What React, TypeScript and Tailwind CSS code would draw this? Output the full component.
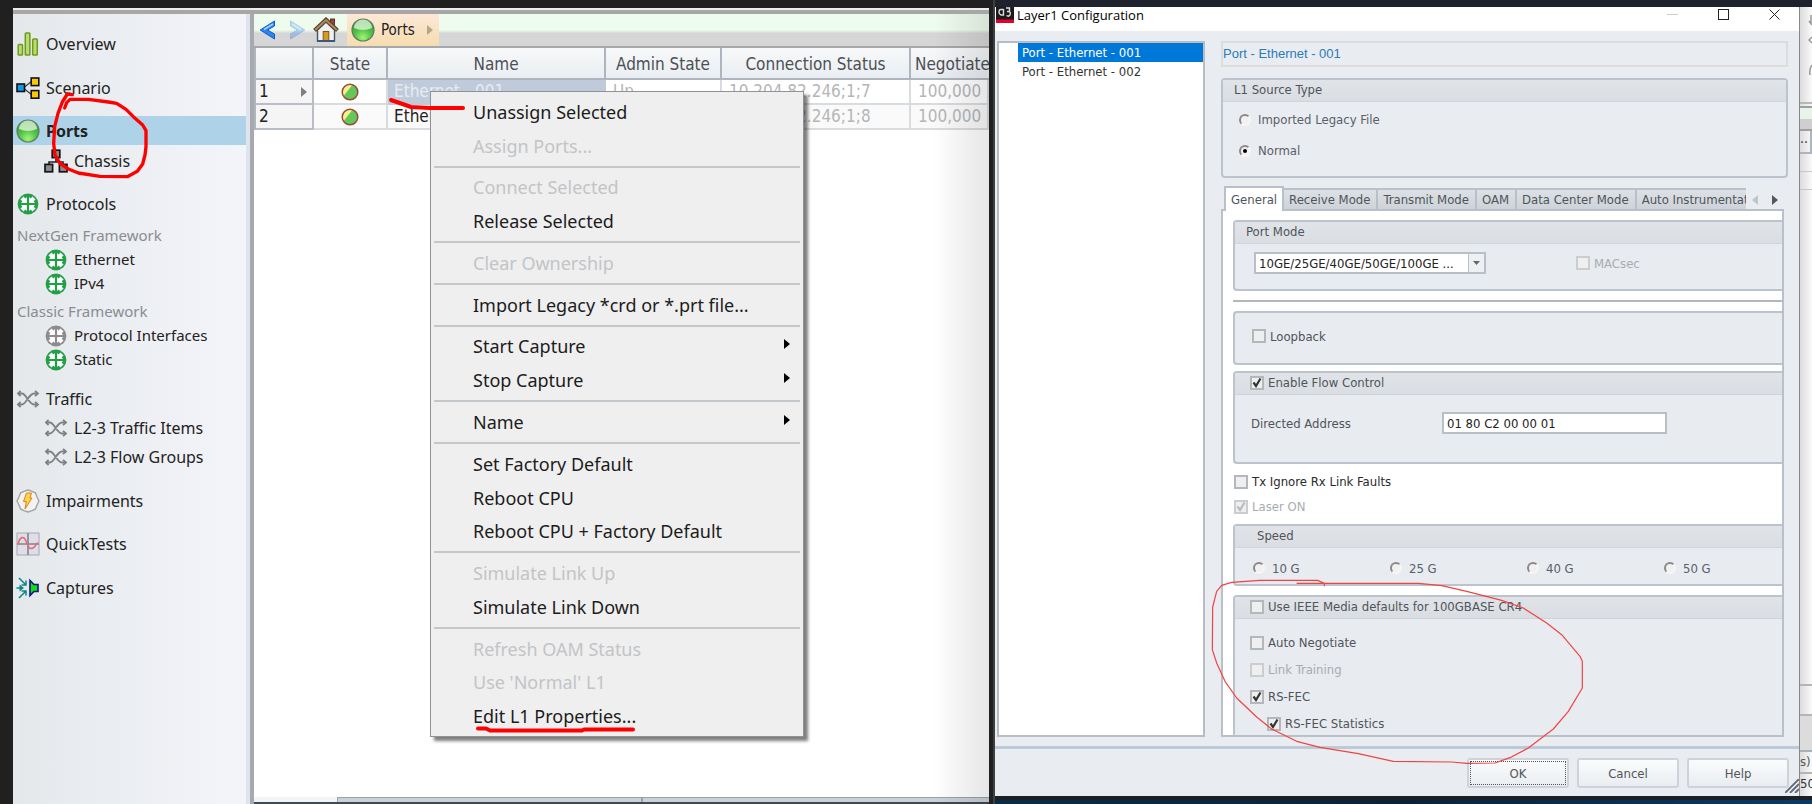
import type { ReactNode } from "react";

/* ---------- icons ---------- */

function OverviewIcon() {
  return (
    <svg width="22" height="24" viewBox="0 0 22 24" fill="#b9dc72" stroke="#6f9a1c" strokeWidth="1.5">
      <rect x="1.2" y="12.5" width="4.3" height="10.5" rx="0.8" />
      <rect x="8.3" y="1" width="4.6" height="22" rx="0.8" />
      <rect x="15.7" y="7" width="4.6" height="16" rx="0.8" />
    </svg>
  );
}

function ScenarioIcon() {
  return (
    <svg width="24" height="22" viewBox="0 0 24 22">
      <path d="M8 10.5 L16 4 M8 11.5 L16 18" stroke="#444" strokeWidth="1.3" fill="none" />
      <rect x="1" y="7" width="7.5" height="7.5" fill="#1597e8" stroke="#111" strokeWidth="1.6" />
      <rect x="15.2" y="1" width="7.6" height="7.6" fill="#fcc805" stroke="#111" strokeWidth="1.6" />
      <rect x="15.2" y="13.6" width="7.6" height="7.6" fill="#fcc805" stroke="#111" strokeWidth="1.6" />
    </svg>
  );
}

function BallIcon({ id }: { id: string }) {
  return (
    <svg width="24" height="24" viewBox="0 0 24 24">
      <defs>
        <radialGradient id={id} cx="50%" cy="85%" r="75%">
          <stop offset="0" stopColor="#a4f47c" />
          <stop offset="0.5" stopColor="#55c646" />
          <stop offset="1" stopColor="#3b9a3a" />
        </radialGradient>
      </defs>
      <circle cx="12" cy="12" r="11" fill={`url(#${id})`} stroke="#5c7f62" strokeWidth="1.2" />
      <path d="M3 10 A9 8.5 0 0 1 21 10 Q12 14 3 10Z" fill="#e6f8e2" opacity="0.75" />
    </svg>
  );
}

function ChassisIcon() {
  return (
    <svg width="24" height="24" viewBox="0 0 24 24">
      <path d="M12 8 V13 M5 16 V13 H19 V16" stroke="#222" strokeWidth="1.6" fill="none" />
      <rect x="8.2" y="1.2" width="7.6" height="7.4" fill="#8b8b8b" stroke="#151515" strokeWidth="1.7" />
      <rect x="1" y="15.4" width="7.6" height="7.4" fill="#8b8b8b" stroke="#151515" strokeWidth="1.7" />
      <rect x="15.4" y="15.4" width="7.6" height="7.4" fill="#8b8b8b" stroke="#151515" strokeWidth="1.7" />
    </svg>
  );
}

function ProtocolIcon({ color }: { color: string }) {
  return (
    <svg width="22" height="22" viewBox="0 0 22 22">
      <circle cx="11" cy="11" r="10.4" fill={color} />
      <g fill="#fff">
        {[0, 90, 180, 270].map((a) => (
          <path key={a} transform={`rotate(${a} 11 11)`} d="M9.9 9.9 H4 L5.4 8.3 L3.4 6.6 L6.6 3.4 L8.3 5.4 L9.9 4Z" />
        ))}
      </g>
    </svg>
  );
}

function TrafficIcon() {
  return (
    <svg width="24" height="18" viewBox="0 0 24 18" fill="none" stroke="#808080" strokeWidth="1.8">
      <path d="M2 3.5 H6 C10 3.5 13 14.5 18 14.5 H22 M2 14.5 H6 C10 14.5 13 3.5 18 3.5 H22" />
      <path d="M19 0.8 L22 3.5 L19 6.2 M19 11.8 L22 14.5 L19 17.2 M4.6 1 L2 3.5 L4.6 6 M4.6 12 L2 14.5 L4.6 17" />
    </svg>
  );
}

function ImpairmentsIcon() {
  return (
    <svg width="24" height="24" viewBox="0 0 24 24">
      <path d="M12 1 L16 2.4 L19.5 4 L21 8 L23 12 L21 16 L19.5 20 L16 21.6 L12 23 L8 21.6 L4.5 20 L3 16 L1 12 L3 8 L4.5 4 L8 2.4Z" fill="#f5f3f2" stroke="#a3a3a3" strokeWidth="1.4" strokeLinejoin="round" />
      <path d="M10.5 4 H15.5 L13.8 9 H16 L9 20 L10.4 12.5 H7.5Z" fill="#ffd54a" stroke="#df7e1c" strokeWidth="1" />
    </svg>
  );
}

function QuickTestsIcon() {
  return (
    <svg width="24" height="24" viewBox="0 0 24 24">
      <rect x="1" y="1" width="22" height="22" fill="#dedee8" stroke="#a8a8b2" />
      <path d="M12 1 V23 M1 12 H23" stroke="#83838f" strokeWidth="1.6" />
      <path d="M2 12 C4 4 8 4 10 9 S13 18 17 16 S19 11 22 11" fill="none" stroke="#e86a72" strokeWidth="1.6" />
    </svg>
  );
}

function CapturesIcon() {
  return (
    <svg width="24" height="24" viewBox="0 0 24 24">
      <g stroke="#0d8585" strokeWidth="1.5" fill="none">
        <path d="M3 2 L10 9 M10 4.5 V9 H5.5 M3 22 L10 15 M5.5 15 H10 V19.5 M0.5 12 H6" />
      </g>
      <path d="M3.5 8.5 L8 12 L3.5 15.5Z" fill="#0d8585" />
      <path d="M14 4.5 L18 8.5 H22 V15.5 H18 L14 19.5Z" fill="#0de20d" stroke="#12128a" strokeWidth="1.6" />
    </svg>
  );
}

function HomeIcon() {
  return (
    <svg width="26" height="26" viewBox="0 0 26 26">
      <rect x="17.5" y="2" width="4" height="8" fill="#9c4638" stroke="#5f3028" />
      <path d="M4.5 13 L13 5 L21.5 13 V24 H4.5Z" fill="#eef1f6" stroke="#4a5560" strokeWidth="1.4" />
      <path d="M1.5 13.5 L13 2.8 L24.5 13.5" fill="none" stroke="#5b452f" strokeWidth="4.2" />
      <path d="M2.2 13 L13 3 L23.8 13" fill="none" stroke="#b08b5a" strokeWidth="1.8" />
      <rect x="10.2" y="14.5" width="5.6" height="9.5" fill="#d99a1e" stroke="#7b5a1e" />
      <path d="M4 24 H22" stroke="#39597d" strokeWidth="2" />
    </svg>
  );
}

function BackArrow({ faded }: { faded?: boolean }) {
  return (
    <svg
      width="18"
      height="20"
      viewBox="0 0 18 20"
      className={faded ? "-scale-x-100 opacity-30" : ""}
      aria-hidden="true"
    >
      <path d="M15.5 1 V6 L8.5 10 L15.5 14 V19 L1.2 10Z" fill="#2c86f2" stroke="#1458c8" strokeWidth="1" />
      <path d="M14 4 L5 9.5" stroke="#9fd0ff" strokeWidth="1.5" />
    </svg>
  );
}

function StateIcon() {
  return (
    <svg width="18" height="18" viewBox="0 0 18 18" className="mx-auto block">
      <circle cx="9" cy="9" r="7.8" fill="#62c85a" />
      <path d="M2.6 13 A7.8 7.8 0 0 1 11.5 1.8Z" fill="#f7f08c" />
      <circle cx="9" cy="9" r="7.8" fill="none" stroke="#9a4a3a" strokeWidth="1.5" />
    </svg>
  );
}

function Triangle({ className, left }: { className: string; left?: boolean }) {
  return (
    <svg width="6" height="10" viewBox="0 0 6 10" className={className}>
      <path d={left ? "M6 0 L0 5 L6 10Z" : "M0 0 L6 5 L0 10Z"} fill="currentColor" />
    </svg>
  );
}

/* ---------- sidebar ---------- */

function NavItem({ icon, label, sub, active, short, className = "" }: {
  icon: ReactNode;
  label: string;
  sub?: boolean;
  active?: boolean;
  short?: boolean;
  className?: string;
}) {
  return (
    <a
      href="#"
      className={`flex items-center gap-[6px] whitespace-nowrap text-[#222] ${short ? "h-6 pt-[3px] text-[15px]" : "h-[29px] text-base"} ${sub ? "pl-[31px]" : "pl-[3px]"} ${active ? "bg-[#aed2e8] font-bold" : ""} ${className}`}
    >
      <span className="flex w-6 shrink-0 justify-center">{icon}</span>
      {label}
    </a>
  );
}

function NavHeading({ children }: { children: string }) {
  return <h2 className="mt-[6px] h-[22px] pl-1 text-[15px] leading-[22px] text-[#8a8c90]">{children}</h2>;
}

function Sidebar() {
  return (
    <nav className="relative w-[241px] shrink-0 border-r-4 border-[#a7a9ae] bg-linear-to-r from-[#e4e8eb] to-[#f4f5fa] pr-1 pt-[15px]">
      <NavItem icon={<OverviewIcon />} label="Overview" />
      <NavItem icon={<ScenarioIcon />} label="Scenario" className="mt-[15px]" />
      <NavItem icon={<BallIcon id="ball-nav" />} label="Ports" active className="mt-[14px]" />
      <NavItem icon={<ChassisIcon />} label="Chassis" sub className="mt-px" />
      <NavItem icon={<ProtocolIcon color="#22a045" />} label="Protocols" className="mt-[14px]" />
      <NavHeading>NextGen Framework</NavHeading>
      <NavItem icon={<ProtocolIcon color="#22a045" />} label="Ethernet" sub short />
      <NavItem icon={<ProtocolIcon color="#22a045" />} label="IPv4" sub short />
      <NavHeading>Classic Framework</NavHeading>
      <NavItem icon={<ProtocolIcon color="#8c8c8c" />} label="Protocol Interfaces" sub short />
      <NavItem icon={<ProtocolIcon color="#22a045" />} label="Static" sub short />
      <NavItem icon={<TrafficIcon />} label="Traffic" className="mt-[14px]" />
      <NavItem icon={<TrafficIcon />} label="L2-3 Traffic Items" sub />
      <NavItem icon={<TrafficIcon />} label="L2-3 Flow Groups" sub />
      <NavItem icon={<ImpairmentsIcon />} label="Impairments" className="mt-[15px]" />
      <NavItem icon={<QuickTestsIcon />} label="QuickTests" className="mt-[14px]" />
      <NavItem icon={<CapturesIcon />} label="Captures" className="mt-[15px]" />
      <div className="absolute inset-y-0 right-0 w-1 bg-[#dfe3ec]" />
      <svg width="110" height="100" viewBox="0 0 330 300" className="pointer-events-none absolute left-[34px] top-[74px]">
        <path
          transform="translate(-141 -264)"
          d="M217 284 L202 282 L187 306 L174 340 L164 380 L161 430 L165 465 L180 490 L205 507 L235 519 L300 529 L382 530 L412 514 L428 492 L435 465 L438 440 L438 392 L428 375 L400 350 L378 328 L350 310 L325 306 L265 298 L210 298 L200 308 L194 324"
          fill="none"
          stroke="#ff0000"
          strokeWidth="10"
          strokeLinecap="round"
          strokeLinejoin="round"
        />
      </svg>
    </nav>
  );
}

/* ---------- context menu ---------- */

const menuGroups: { label: string; disabled?: boolean; arrow?: boolean }[][] = [
  [{ label: "Unassign Selected" }, { label: "Assign Ports...", disabled: true }],
  [{ label: "Connect Selected", disabled: true }, { label: "Release Selected" }],
  [{ label: "Clear Ownership", disabled: true }],
  [{ label: "Import Legacy *crd or *.prt file..." }],
  [{ label: "Start Capture", arrow: true }, { label: "Stop Capture", arrow: true }],
  [{ label: "Name", arrow: true }],
  [{ label: "Set Factory Default" }, { label: "Reboot CPU" }, { label: "Reboot CPU + Factory Default" }],
  [{ label: "Simulate Link Up", disabled: true }, { label: "Simulate Link Down" }],
  [
    { label: "Refresh OAM Status", disabled: true },
    { label: "Use 'Normal' L1", disabled: true },
    { label: "Edit L1 Properties..." },
  ],
];

function ContextMenu() {
  return (
    <div
      role="menu"
      className="absolute left-[176px] top-[77px] z-10 flex h-[646px] w-[374px] flex-col border border-[#8f9296] bg-[#efefef] px-[3px] py-[3px] shadow-[4px_4px_3px_rgba(0,0,0,0.5)]"
    >
      {menuGroups.map((group, g) => (
        <div key={g} className="contents">
          {g > 0 && <div role="separator" className="my-[3px] h-[2px] shrink-0 bg-[#c3c8cc]" />}
          {group.map((item) => (
            <button
              key={item.label}
              type="button"
              role="menuitem"
              disabled={item.disabled}
              className="flex flex-1 items-center justify-between pl-[39px] pr-[10px] text-left text-lg leading-none text-[#1c1c1c] disabled:text-[#c2c4c7]"
            >
              {item.label}
              {item.arrow && <Triangle className="mb-1 text-black" />}
            </button>
          ))}
        </div>
      ))}
      <svg width="80" height="16" viewBox="0 0 80 16" className="pointer-events-none absolute -left-[45px] top-[3px]">
        <path d="M5 5 L18 9.5 L25 12 L44 13 L77 13" fill="none" stroke="#ff0000" strokeWidth="4" strokeLinecap="round" strokeLinejoin="round" />
      </svg>
      <svg width="164" height="10" viewBox="0 0 164 10" className="pointer-events-none absolute bottom-[1px] left-[43px]">
        <path d="M4 3.5 L12 3.5 L16 5.5 L108 5.5 L110 4.5 L159 4.5" fill="none" stroke="#ff0000" strokeWidth="4" strokeLinecap="round" strokeLinejoin="round" />
      </svg>
    </div>
  );
}

/* ---------- ports window ---------- */

const th = "h-8 overflow-hidden whitespace-nowrap border-b-2 border-r-2 border-[#aeb5bd] p-0 pt-[2px] text-center font-normal text-[#4c5054]";
const td = "h-[25px] overflow-hidden whitespace-nowrap border-b-2 border-r-2 border-[#d9dcdf] p-0 pl-[7px] text-[#b4b6b8]";

function PortsWindow() {
  return (
    <section className="flex min-h-0 min-w-0 flex-col bg-[#202020] pl-[13px] pr-1 pt-2">
      <div className="h-[2px] shrink-0 bg-[#ececec]" />
      <div className="h-1 shrink-0 bg-[#a7a7a7]" />
      <div className="flex min-h-0 flex-1">
        <Sidebar />
        <div className="relative flex min-w-0 flex-1 flex-col bg-white">
          <div className="flex h-[34px] shrink-0 items-center border-b-2 border-[#a6a9ab] bg-linear-to-b from-[#eefcee] from-50% to-[#d6d6d6] to-60% pl-[5px]">
            <button type="button" aria-label="Back"><BackArrow /></button>
            <button type="button" aria-label="Forward" className="ml-[11px]"><BackArrow faded /></button>
            <button type="button" aria-label="Home" className="ml-[7px]"><HomeIcon /></button>
            <button type="button" className="ml-[8px] flex h-full items-center gap-[6px] bg-linear-to-b from-[#fde8d6] to-[#f5dcb0] pl-1 pr-[6px] font-['DejaVu_Sans_Condensed','Noto_Sans',sans-serif] text-[15px] text-[#222]">
              <BallIcon id="ball-crumb" />
              Ports
              <Triangle className="ml-[6px] text-[#b3a68c]" />
            </button>
          </div>
          <table className="w-full table-fixed border-separate border-spacing-0 border-l-2 border-[#aeb5bd] font-['DejaVu_Sans_Condensed','Noto_Sans',sans-serif] text-[17px] leading-none">
            <colgroup>
              <col className="w-[58px]" />
              <col className="w-[74px]" />
              <col className="w-[218px]" />
              <col className="w-[116px]" />
              <col className="w-[189px]" />
              <col />
            </colgroup>
            <thead>
              <tr className="bg-linear-to-b from-[#f7f8f9] to-[#e9edf2]">
                <th className={th} aria-label="Row" />
                <th className={th}>State</th>
                <th className={th}>Name</th>
                <th className={th}>Admin State</th>
                <th className={th}>Connection Status</th>
                <th className="h-8 overflow-hidden whitespace-nowrap border-b-2 border-[#aeb5bd] p-0 pl-1 pt-[2px] text-left font-normal text-[#4c5054]">Negotiate</th>
              </tr>
            </thead>
            <tbody>
              <tr>
                <td className="h-[25px] border-b-2 border-r-2 border-[#b9bec4] bg-[#f5f5f6] p-0 pl-[3px] pr-[5px] text-[#222]">
                  <span className="flex items-center justify-between">1<Triangle className="text-[#7d7f82]" /></span>
                </td>
                <td className="border-b-2 border-r-2 border-[#d9dcdf] p-0"><StateIcon /></td>
                <td className="overflow-hidden whitespace-nowrap border-b-2 border-r-2 border-[#bfcbdb] bg-[#bfcbdb] p-0 pl-[6px] text-[#e6ebf1]">Ethernet - 001</td>
                <td className={td}>Up</td>
                <td className={td}>10.204.82.246;1;7</td>
                <td className={td}>100,000</td>
              </tr>
              <tr className="bg-[#fafafa]">
                <td className="h-[25px] border-b-2 border-r-2 border-[#b9bec4] bg-[#f5f5f6] p-0 pl-[3px] text-[#222]">2</td>
                <td className="border-b-2 border-r-2 border-[#d9dcdf] p-0"><StateIcon /></td>
                <td className="overflow-hidden whitespace-nowrap border-b-2 border-r-2 border-[#d9dcdf] p-0 pl-[6px] text-[#222]">Ethernet - 002</td>
                <td className={td}>Up</td>
                <td className={td}>10.204.82.246;1;8</td>
                <td className={td}>100,000</td>
              </tr>
            </tbody>
          </table>
          <ContextMenu />
          <div className="mt-auto flex h-[7px] shrink-0 border-b-2 border-[#3c4a58]">
            <div className="w-[84px] border-r border-[#9aa3ac] bg-[#f2f4f6]" />
            <div className="w-[305px] border-r-2 border-t border-[#9aa3ac] bg-[#ccd1d6]" />
            <div className="flex-1 border-t border-[#9aa3ac] bg-[#ccd1d6]" />
          </div>
          <div className="pointer-events-none absolute inset-y-0 right-0 w-14 bg-linear-to-r from-transparent to-black/10" />
        </div>
      </div>
    </section>
  );
}

/* ---------- form controls ---------- */

function Check({ label, checked, disabled, dark, className = "" }: {
  label: string;
  checked?: boolean;
  disabled?: boolean;
  dark?: boolean;
  className?: string;
}) {
  return (
    <label className={`flex items-center gap-1 whitespace-nowrap ${disabled ? "text-[#a9acaf]" : dark ? "text-[#2a2a2a]" : "text-[#505459]"} ${className}`}>
      <span className="relative flex">
        <input
          type="checkbox"
          defaultChecked={checked}
          disabled={disabled}
          className="h-[14px] w-[14px] appearance-none border-2 border-[#b4b8bd] bg-[#efefef] disabled:border-[#cbcdd0]"
        />
        {checked && (
          <svg width="14" height="14" viewBox="0 0 14 14" className="pointer-events-none absolute inset-0">
            <path d="M3.5 6.5 L6 10 L10.5 2.5" fill="none" stroke={disabled ? "#b9bcbf" : "#333"} strokeWidth="2.2" />
          </svg>
        )}
      </span>
      {label}
    </label>
  );
}

function Radio({ label, name, checked, className = "" }: { label: string; name: string; checked?: boolean; className?: string }) {
  return (
    <label className={`flex items-center gap-[7px] whitespace-nowrap text-[#5a5f68] ${className}`}>
      <span className="relative flex">
        <input
          type="radio"
          name={name}
          defaultChecked={checked}
          className="h-3 w-3 appearance-none rounded-full border-2 border-[#f6f6f6] border-l-[#8a8a8a] border-t-[#8a8a8a] bg-[#f1f1f1]"
        />
        {checked && <span className="pointer-events-none absolute left-1 top-1 h-1 w-1 rounded-full bg-black" />}
      </span>
      {label}
    </label>
  );
}

const groupBox = "rounded-l-sm border-y-2 border-l-2 border-[#bcc3cc] bg-[#e8ebf0]";
const groupHead = "flex h-[22px] items-center border-b border-[#cfd4da] bg-linear-to-b from-[#e0e4e8] to-[#dadee3] pb-[2px] text-[#505459]";

const tabs = ["Receive Mode", "Transmit Mode", "OAM", "Data Center Mode", "Auto Instrumentation"];

function GeneralPanel() {
  return (
    <div className="mr-1 flex min-h-0 flex-1 flex-col overflow-hidden border-2 border-[#b9c0c9] bg-white pl-[10px] pt-[9px]">
      <fieldset className={`${groupBox} h-[71px] shrink-0`}>
        <div className={`${groupHead} pl-[11px]`}>Port Mode</div>
        <div className="flex items-center pl-[19px] pt-2">
          <div className="relative w-[232px]">
            <select aria-label="Port Mode" className="h-[22px] w-full appearance-none border-2 border-[#b9bfc7] bg-white pl-[3px] leading-none text-[#222]">
              <option>10GE/25GE/40GE/50GE/100GE ...</option>
            </select>
            <span className="pointer-events-none absolute bottom-[2px] right-[2px] top-[2px] flex w-4 items-center justify-center border-l border-[#b9bfc7] bg-[#eef1f4]">
              <svg width="7" height="4" viewBox="0 0 7 4"><path d="M0 0 H7 L3.5 4Z" fill="#666" /></svg>
            </span>
          </div>
          <Check label="MACsec" disabled className="ml-[90px]" />
        </div>
      </fieldset>
      <hr className="mt-[9px] shrink-0 border-t-2 border-[#b3b6ba]" />
      <fieldset className={`${groupBox} mt-[9px] h-[54px] shrink-0 pl-[17px]`}>
        <Check label="Loopback" className="h-[46px]" />
      </fieldset>
      <fieldset className={`${groupBox} mt-[6px] h-[93px] shrink-0`}>
        <div className={`${groupHead} pl-[15px]`}><Check label="Enable Flow Control" checked /></div>
        <div className="flex items-center pl-4 pt-[17px]">
          <label htmlFor="directed" className="w-[191px] text-[#505459]">Directed Address</label>
          <input id="directed" defaultValue="01 80 C2 00 00 01" className="h-[22px] w-[225px] border-2 border-[#b9bfc7] bg-white px-[3px] text-[#222]" />
        </div>
      </fieldset>
      <Check label="Tx Ignore Rx Link Faults" dark className="mt-[5px] h-[25px] shrink-0 pl-px" />
      <Check label="Laser ON" checked disabled className="h-[25px] shrink-0 pl-px" />
      <fieldset className={`${groupBox} mt-[5px] h-[62px] shrink-0`}>
        <div className={`${groupHead} pl-[22px]`}>Speed</div>
        <div className="flex h-[38px] items-center pl-[18px] pt-[2px]">
          {["10 G", "25 G", "40 G", "50 G"].map((s) => (
            <Radio key={s} name="speed" label={s} className="w-[137px]" />
          ))}
        </div>
      </fieldset>
      <fieldset className={`${groupBox} mt-[9px] min-h-[160px] shrink-0`}>
        <div className={`${groupHead} pl-[15px]`}><Check label="Use IEEE Media defaults for 100GBASE CR4" /></div>
        <div className="flex flex-col pl-[15px] pt-[10px]">
          <Check label="Auto Negotiate" className="h-[27px]" />
          <Check label="Link Training" disabled className="h-[27px]" />
          <Check label="RS-FEC" checked className="h-[27px]" />
          <Check label="RS-FEC Statistics" checked className="h-[27px] pl-[17px]" />
        </div>
      </fieldset>
    </div>
  );
}

/* ---------- dialog ---------- */

const dialogButton = "h-[30px] w-[102px] rounded-[3px] border-2 border-[#cdd3d9] bg-linear-to-b from-[#fbfcfd] to-[#e9edf1] text-[#505459]";

function Dialog() {
  return (
    <div className="relative flex min-w-0 flex-1 flex-col bg-[#e9ecf1]">
      <header className="flex h-6 shrink-0 items-start bg-white pl-px">
        <svg width="18" height="16" viewBox="0 0 18 16">
          <rect width="18" height="16" fill="#1b1b1b" />
          <rect y="12.5" width="18" height="3.5" fill="#e4002b" />
          <path d="M7.5 2.5 H5 Q3 2.5 3 5 T5 8 H7.5 V2 M10 1 H13.5 V4.5 H11 M13.5 4.5 Q15 6 14 8 Q12.5 10 10.5 8.5" fill="none" stroke="#ddd" strokeWidth="1.4" />
        </svg>
        <h1 className="ml-[3px] flex-1 font-['Open_Sans','Noto_Sans',sans-serif] text-[13px] leading-4 text-black">Layer1 Configuration</h1>
        <div className="flex items-start gap-10 pr-[19px] pt-[2px]">
          <button type="button" aria-label="Minimize"><svg width="11" height="11" viewBox="0 0 11 11"><path d="M0 5.5 H11" stroke="#ccc" /></svg></button>
          <button type="button" aria-label="Maximize"><svg width="11" height="11" viewBox="0 0 11 11"><rect x="0.5" y="0.5" width="10" height="10" fill="none" stroke="#222" /></svg></button>
          <button type="button" aria-label="Close"><svg width="11" height="11" viewBox="0 0 11 11"><path d="M0.5 0.5 L10.5 10.5 M10.5 0.5 L0.5 10.5" stroke="#222" /></svg></button>
        </div>
      </header>
      <div className="flex min-h-0 flex-1 gap-4 pb-[9px] pl-[2px] pr-[11px] pt-[10px]">
        <ul className="w-[208px] shrink-0 border-2 border-[#b8bdc5] bg-white pl-[19px] leading-[19px]">
          <li className="bg-[#0078d7] pl-1 text-white">Port - Ethernet - 001</li>
          <li className="pl-1 text-[#333]">Port - Ethernet - 002</li>
        </ul>
        <div className="flex min-w-0 flex-1 flex-col">
          <h2 className="h-[26px] shrink-0 border-2 border-[#dadcde] font-['Liberation_Sans',Arial,sans-serif] text-[13px] leading-[22px] text-[#2b7cb8]">
            Port - Ethernet - 001
          </h2>
          <fieldset className="mt-[11px] h-[100px] shrink-0 rounded-sm border-2 border-[#bcc3cc]">
            <div className={`${groupHead} pl-[11px]`}>L1 Source Type</div>
            <div className="flex flex-col pl-4 pt-[2px]">
              <Radio name="source" label="Imported Legacy File" className="h-[31px]" />
              <Radio name="source" label="Normal" checked className="h-[31px]" />
            </div>
          </fieldset>
          <div className="relative z-10 -mb-[2px] mt-2 flex shrink-0 items-end pl-[3px]">
            <div role="tablist" className="flex min-w-0 flex-1 items-end overflow-hidden">
              <button type="button" role="tab" aria-selected="true" className="h-[25px] shrink-0 border-2 border-b-0 border-[#b9c0c9] bg-white px-[5px] text-[#505459]">General</button>
              {tabs.map((t) => (
                <button key={t} type="button" role="tab" aria-selected="false" className="h-[23px] shrink-0 whitespace-nowrap border-b-2 border-r-2 border-t-2 border-[#b9c0c9] bg-linear-to-b from-[#dde1e6] to-[#cdd3d9] pl-[5px] pr-[6px] text-[#505459]">
                  {t}
                </button>
              ))}
            </div>
            <div className="flex h-[23px] shrink-0 items-center gap-[14px] pl-[6px] pr-[10px]">
              <button type="button" aria-label="Scroll tabs left"><Triangle left className="text-[#c2c6ca]" /></button>
              <button type="button" aria-label="Scroll tabs right"><Triangle className="text-[#55585c]" /></button>
            </div>
          </div>
          <GeneralPanel />
        </div>
      </div>
      <footer className="flex h-[50px] shrink-0 items-start justify-end gap-2 border-t-[3px] border-[#bccad8] pr-[10px] pt-[9px]">
        <button type="button" className={`${dialogButton} p-px`}>
          <span className="flex h-full items-center justify-center border border-dotted border-[#50555a]">OK</span>
        </button>
        <button type="button" className={dialogButton}>Cancel</button>
        <button type="button" className={dialogButton}>Help</button>
      </footer>
      <svg width="14" height="14" viewBox="0 0 14 14" className="absolute bottom-[3px] right-0">
        <path d="M0 14 L14 0 M5 14 L14 5 M10 14 L14 10" stroke="#5b6772" strokeWidth="1.8" />
      </svg>
      <svg width="380" height="190" viewBox="0 0 1140 570" className="pointer-events-none absolute bottom-[29px] left-[214px] z-20">
        <path
          transform="translate(-27 -292)"
          d="M373 320 V311 L353 302 H180 L95 308 L65 317 L50 335 L38 382 L37 510 L50 550 L75 605 L110 655 L170 712 L215 748 L290 785 L360 803 L475 822 L580 845 L755 847 L800 851 L885 850 L930 834 L985 805 L1060 748 L1105 695 L1147 625 V545 L1140 530 L1085 465 L1040 430 L970 385 L905 362 L800 335 L725 318 L655 311 H290"
          fill="none"
          stroke="#f04444"
          strokeWidth="3.6"
          strokeLinejoin="round"
        />
      </svg>
    </div>
  );
}

function BackgroundStrip() {
  return (
    <div className="flex w-[13px] shrink-0 flex-col overflow-hidden border-l border-[#888] bg-linear-to-r from-[#dcdcdc] to-[#fafafa] text-lg text-[#555]">
      <div className="flex h-[97px] shrink-0 flex-col items-end border-b-2 border-[#b8b8b8] pt-2">
        <svg width="4" height="60" viewBox="0 0 4 60" fill="none" stroke="#999" strokeWidth="1.5">
          <path d="M3 0 V8 M1 6 L4 10 M4 22 L1 25 L4 28 M4 50 Q1 54 2 60" />
        </svg>
      </div>
      <div className="h-1 shrink-0 border-b-2 border-[#a0a0a0]" />
      <div className="h-[11px] shrink-0 bg-[#eaf3ea]" />
      <div className="h-3 shrink-0 border-b-2 border-[#a0a0a0] bg-[#cfcfcf]" />
      <div className="h-[23px] shrink-0 border-b-2 border-r-2 border-[#b0b5bc] text-sm leading-none text-[#333]">..</div>
      <div className="h-[18px] shrink-0 border-b border-[#c8c8c8]" />
      <div className="h-[18px] shrink-0 border-b border-[#c8c8c8]" />
      <div className="flex-1 border-b-2 border-[#b5b5b5]" />
      <div className="h-[30px] shrink-0 border-b-2 border-[#b5b5b5]" />
      <div className="h-[36px] shrink-0 border-b-2 border-[#a9b0b8] bg-[#dcdcdc]" />
      <div className="h-[22px] shrink-0 border-b-2 border-[#b5b5b5] text-[13px] leading-5">s)</div>
      <div className="h-[22px] shrink-0 text-[13px] leading-5 text-[#333]">50</div>
    </div>
  );
}

export default function App() {
  return (
    <main className="grid h-screen grid-cols-[minmax(0,993fr)_minmax(0,819fr)] grid-rows-[minmax(0,1fr)] overflow-hidden bg-[#202020] font-['Noto_Sans','Open_Sans',sans-serif]">
      <PortsWindow />
      <section className="flex min-h-0 min-w-0 flex-col border-l-2 border-[#3f4042] bg-[#1d222c] pt-[7px] font-['DejaVu_Sans_Condensed','Noto_Sans',sans-serif] text-[13px] leading-none">
        <div className="flex min-h-0 flex-1">
          <Dialog />
          <BackgroundStrip />
        </div>
        <div className="h-1 shrink-0 rounded-br-lg bg-[#1c1f24]" />
        <div className="h-1 shrink-0 bg-linear-to-r from-[#0b2b45] via-[#0a2238] to-[#0a3a66]" />
      </section>
    </main>
  );
}
